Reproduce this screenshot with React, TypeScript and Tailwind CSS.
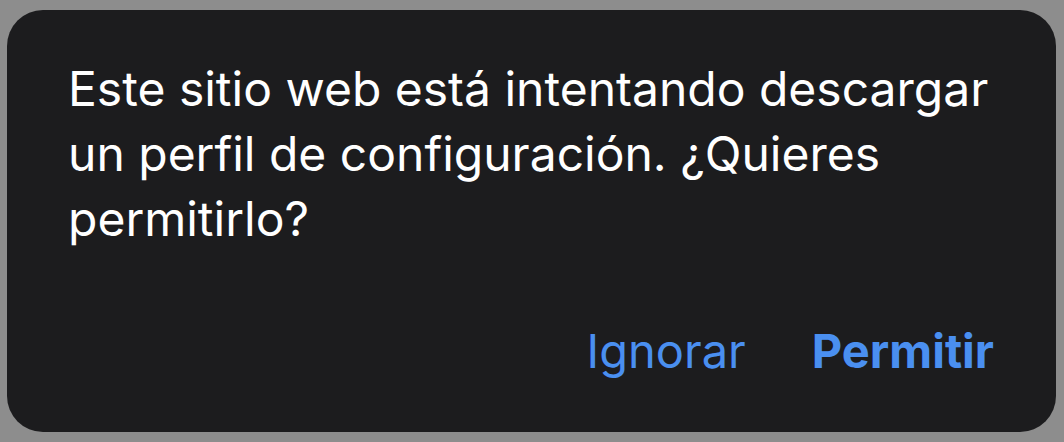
import React from "react";

export default function App() {
  return (
    <div className="w-[1064px] h-[442px] bg-[#8d8d8d] pt-[10px] pb-[10px] pl-[7px] pr-[8px] font-['Inter',sans-serif]">
      <div className="h-full rounded-[36px] bg-[#1c1c1e] pl-[61px] pr-[40px] pt-[46px] flex flex-col">
        <p className="text-white text-[48px] leading-[65px]">
          Este sitio web está intentando descargar un perfil de configuración. ¿Quieres permitirlo?
        </p>
        <div className="mt-auto mb-[56px] flex justify-end items-center gap-[66px] pr-[22px] text-[47px] leading-[50px] text-[#4a8ff0]">
          <button>Ignorar</button>
          <button className="font-bold">Permitir</button>
        </div>
      </div>
    </div>
  );
}
